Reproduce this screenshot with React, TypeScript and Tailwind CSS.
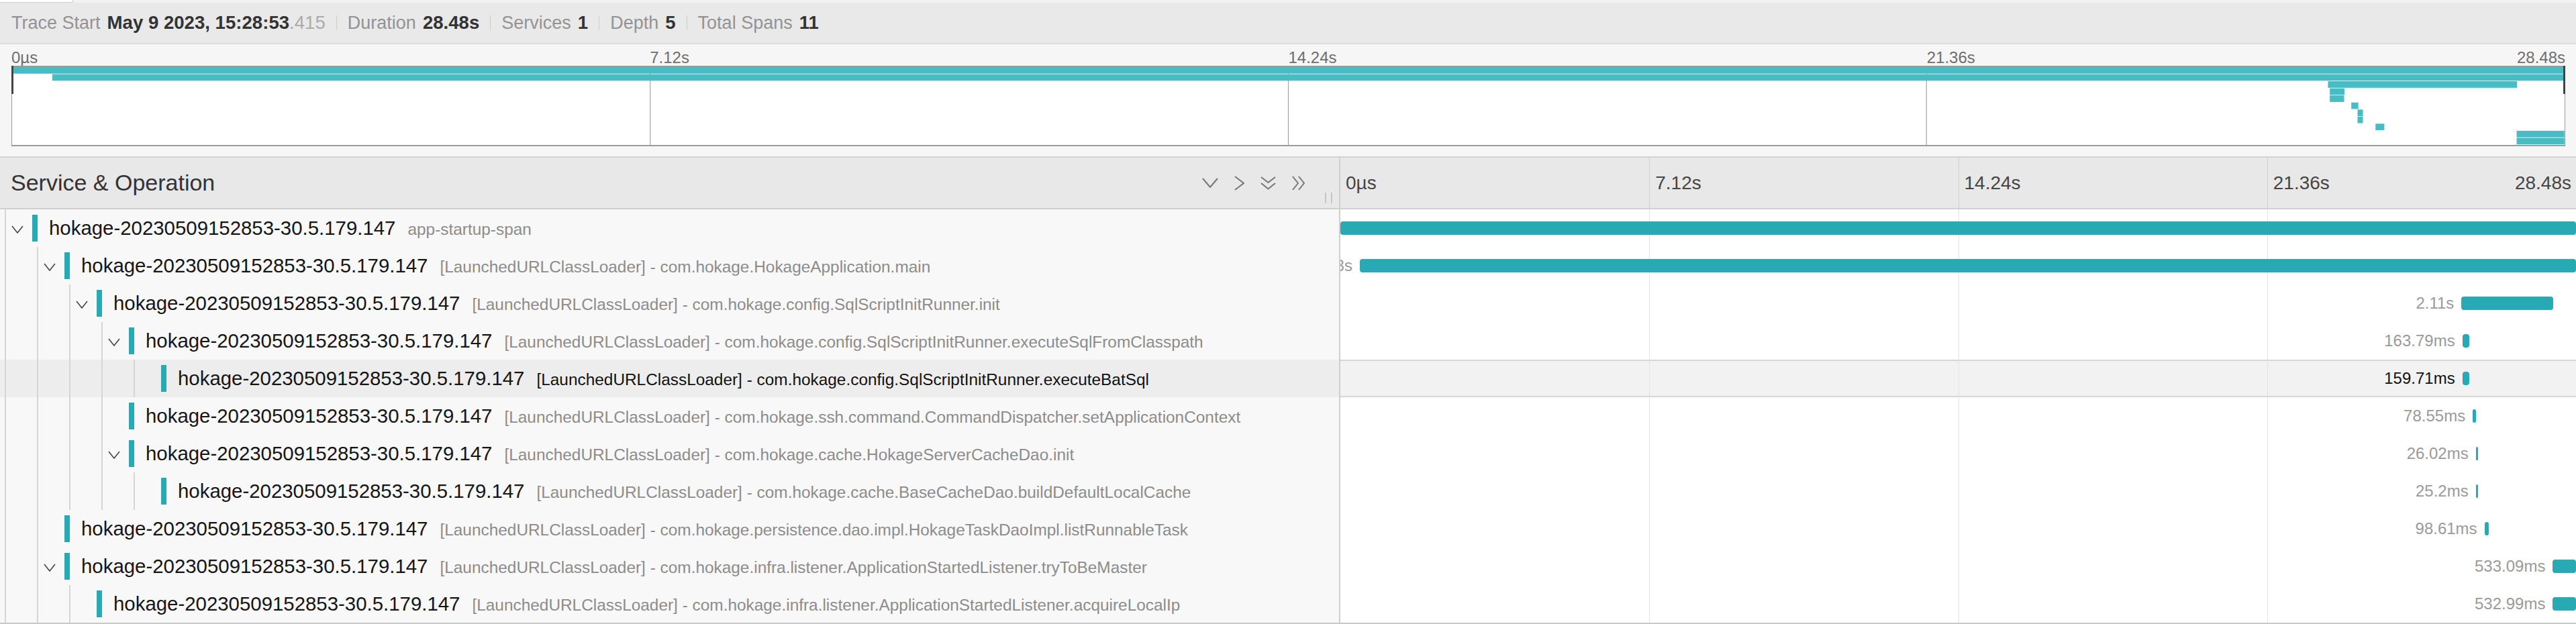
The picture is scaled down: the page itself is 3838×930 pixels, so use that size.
import clsx from 'clsx';

type Span = {
  depth: number;
  op: string;
  start: number;
  dur: number;
  label?: string;
  kids?: boolean;
  hover?: boolean;
};

const TOTAL = 28.48;
const SVC = 'hokage-20230509152853-30.5.179.147';
const L = '[LaunchedURLClassLoader] - ';

// root span label sits fully under the left column, so it is left out
const spans: Span[] = [
  { depth: 0, op: 'app-startup-span', start: 0, dur: 28.48, kids: true },
  { depth: 1, op: L + 'com.hokage.HokageApplication.main', start: 0.448, dur: 28.03, label: '28.03s', kids: true },
  { depth: 2, op: L + 'com.hokage.config.SqlScriptInitRunner.init', start: 25.84, dur: 2.11, label: '2.11s', kids: true },
  { depth: 3, op: L + 'com.hokage.config.SqlScriptInitRunner.executeSqlFromClasspath', start: 25.86, dur: 0.16379, label: '163.79ms', kids: true },
  { depth: 4, op: L + 'com.hokage.config.SqlScriptInitRunner.executeBatSql', start: 25.86, dur: 0.15971, label: '159.71ms', hover: true },
  { depth: 3, op: L + 'com.hokage.ssh.command.CommandDispatcher.setApplicationContext', start: 26.1, dur: 0.07855, label: '78.55ms' },
  { depth: 3, op: L + 'com.hokage.cache.HokageServerCacheDao.init', start: 26.17, dur: 0.02602, label: '26.02ms', kids: true },
  { depth: 4, op: L + 'com.hokage.cache.BaseCacheDao.buildDefaultLocalCache', start: 26.17, dur: 0.0252, label: '25.2ms' },
  { depth: 1, op: L + 'com.hokage.persistence.dao.impl.HokageTaskDaoImpl.listRunnableTask', start: 26.37, dur: 0.09861, label: '98.61ms' },
  { depth: 1, op: L + 'com.hokage.infra.listener.ApplicationStartedListener.tryToBeMaster', start: 27.945, dur: 0.53309, label: '533.09ms', kids: true },
  { depth: 2, op: L + 'com.hokage.infra.listener.ApplicationStartedListener.acquireLocalIp', start: 27.945, dur: 0.53299, label: '532.99ms' },
];

function Sep() {
  return <div className="mx-[16px] h-[22px] w-px bg-[#cdcdcd]" />;
}

function Item({ label, value, muted }: { label: string; value: string; muted?: string }) {
  return (
    <>
      <span className="text-[27px] text-[#939393]">{label}</span>
      <span className="ml-[10px] text-[27.6px] font-bold text-[#333]">{value}</span>
      {muted && <span className="text-[27.6px] text-[#ababab]">{muted}</span>}
    </>
  );
}

function TraceHeader() {
  return (
    <div className="flex h-[62px] items-center border-b-2 border-[#dcdcdc] bg-[#e9e9e9] pl-[17px] whitespace-nowrap">
      <Item label="Trace Start" value="May 9 2023, 15:28:53" muted=".415" />
      <Sep />
      <Item label="Duration" value="28.48s" />
      <Sep />
      <Item label="Services" value="1" />
      <Sep />
      <Item label="Depth" value="5" />
      <Sep />
      <Item label="Total Spans" value="11" />
    </div>
  );
}

function Minimap() {
  const W = 3803;
  const H = 116;
  const rh = H / spans.length;
  return (
    <div className="border-b-2 border-[#d2d2d2] bg-[#f6f6f6] pt-[8px] pr-[16px] pb-[15px] pl-[17px]">
      <div className="grid h-[24px] grid-cols-4 text-[24px] leading-[24px] text-[#6e6e6e]">
        <span>0µs</span>
        <span>7.12s</span>
        <span>14.24s</span>
        <div className="flex justify-between">
          <span>21.36s</span>
          <span>28.48s</span>
        </div>
      </div>
      <div className="relative h-[120px] border-x border-y-2 border-[#9a9a9a] bg-white">
        <svg className="block h-full w-full" viewBox={`0 0 ${W} ${H}`} preserveAspectRatio="none">
          {[0.25, 0.5, 0.75].map((f) => (
            <line key={f} x1={W * f} x2={W * f} y1={0} y2={H} stroke="#a3a3a3" strokeWidth={1.2} />
          ))}
          {spans.map((s, i) => (
            <rect
              key={i}
              x={(s.start / TOTAL) * W}
              y={i * rh}
              width={Math.max((s.dur / TOTAL) * W, 8)}
              height={rh - 0.8}
              fill="#48bcc4"
            />
          ))}
        </svg>
        <div className="absolute top-[-2px] left-[-1px] h-[42px] w-[3px] bg-[#444]" />
        <div className="absolute top-[-2px] right-[-1px] h-[42px] w-[3px] bg-[#444]" />
      </div>
    </div>
  );
}

function Icon({ d, w, h }: { d: string[]; w: number; h: number }) {
  return (
    <svg width={w} height={h} viewBox={`0 0 ${w} ${h}`} fill="none" stroke="#767676" strokeWidth={2}>
      {d.map((p) => (
        <polyline key={p} points={p} />
      ))}
    </svg>
  );
}

function ColumnHeader() {
  return (
    <div className="flex h-[77px] border-b-2 border-[#cfcfcf] bg-[#e8e8e8]">
      <div className="flex w-[1995px] shrink-0 items-center pl-[16px]">
        <span className="text-[34px] text-[#333]">Service &amp; Operation</span>
        <div className="ml-auto flex items-center gap-[24px]">
          <Icon w={24} h={15} d={['1,1 12,14 23,1']} />
          <Icon w={15} h={22} d={['1,1 14,11 1,21']} />
          <Icon w={23} h={20} d={['1,1 11.5,9 22,1', '1,10 11.5,18.5 22,10']} />
          <Icon w={20} h={22} d={['1,1 9,11 1,21', '10,1 18,11 10,21']} />
        </div>
        <div className="mr-[10px] mb-[7px] ml-[29px] flex gap-[7px] self-end">
          <div className="h-[16px] w-[2px] bg-[#c6c6c6]" />
          <div className="h-[16px] w-[2px] bg-[#c6c6c6]" />
        </div>
      </div>
      <div className="grid flex-1 grid-cols-4 border-l-2 border-[#cfcfcf] text-[28px] text-[#464646]">
        <div className="flex items-center pl-[8px]">0µs</div>
        <div className="flex items-center border-l border-[#cfcfcf] pl-[8px]">7.12s</div>
        <div className="flex items-center border-l border-[#cfcfcf] pl-[8px]">14.24s</div>
        <div className="flex items-center justify-between border-l border-[#cfcfcf] pr-[7px] pl-[8px]">
          <span>21.36s</span>
          <span>28.48s</span>
        </div>
      </div>
    </div>
  );
}

function SpanRow({ s }: { s: Span }) {
  const left = (s.start / TOTAL) * 100;
  const width = (s.dur / TOTAL) * 100;
  return (
    <div className="flex h-[56px]">
      <div
        className={clsx(
          'flex w-[1995px] shrink-0 items-stretch overflow-hidden pl-[7px]',
          s.hover ? 'bg-[#ededed]' : 'bg-[#f8f8f8]'
        )}
      >
        {Array.from({ length: s.depth }).map((_, i) => (
          <div key={i} className="w-[48px] shrink-0 border-l-2 border-[#d6d6d6]" />
        ))}
        <div className="flex items-center border-l-2 border-[#d6d6d6] pl-[8px] whitespace-nowrap">
          <div className="flex w-[18px] shrink-0 items-center pt-[3px]">
            {s.kids && (
              <svg width="18" height="12" viewBox="0 0 18 12" fill="none" stroke="#444" strokeWidth={1.6}>
                <polyline points="1,1 9,11 17,1" />
              </svg>
            )}
          </div>
          <div className="ml-[13px] h-[40px] w-[8px] shrink-0 bg-[#27aab4]" />
          <div className="ml-[17px] flex items-baseline">
            <span className="text-[29.4px] text-[#151515]">{SVC}</span>
            <span className={clsx('ml-[18px] text-[24.4px]', s.hover ? 'text-[#111]' : 'text-[#8c8c8c]')}>
              {s.op}
            </span>
          </div>
        </div>
      </div>
      <div
        className={clsx(
          'relative flex-1 overflow-hidden border-l-2 border-[#cfcfcf]',
          s.hover ? 'bg-[#f2f2f2] shadow-[inset_0_2px_0_#d6d6d6,inset_0_-2px_0_#d6d6d6]' : 'bg-white'
        )}
      >
        <div className="absolute inset-0 grid grid-cols-4">
          <div />
          <div className="border-l border-[#e3e3e3]" />
          <div className="border-l border-[#e3e3e3]" />
          <div className="border-l border-[#e3e3e3]" />
        </div>
        {s.label && (
          <div
            className={clsx(
              'absolute top-0 flex h-full items-center text-[24px] whitespace-nowrap',
              s.hover ? 'text-[#111]' : 'text-[#9a9a9a]'
            )}
            style={{ right: `calc(${100 - left}% + 11px)` }}
          >
            {s.label}
          </div>
        )}
        <div
          className="absolute top-[18px] h-[20px] rounded-[4px] bg-[#27aab4]"
          style={{ left: `${left}%`, width: `max(${width}%, 3px)` }}
        />
      </div>
    </div>
  );
}

export default function App() {
  return (
    <div className="min-h-screen w-full overflow-hidden bg-white font-['Liberation_Sans',Arial,sans-serif]">
      <div className="h-[4px] bg-[#f2f2f2]">
        <div className="h-full w-[109px] border-r border-b border-[#cfcfcf] bg-white" />
      </div>
      <TraceHeader />
      <Minimap />
      <ColumnHeader />
      <div className="border-b-2 border-[#c9c9c9]">
        {spans.map((s, i) => (
          <SpanRow key={i} s={s} />
        ))}
      </div>
    </div>
  );
}
